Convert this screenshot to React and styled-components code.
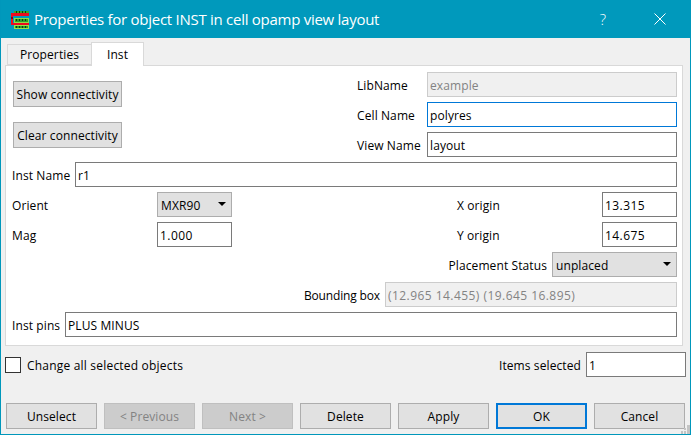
import React from "react";
import styled, { createGlobalStyle } from "styled-components";

const UI_FONT = `"Open Sans", "Noto Sans", "Liberation Sans", sans-serif`;

function AppIcon() {
  return (
    <svg width="20" height="20" viewBox="0 0 20 20">
      <rect x="3" y="2" width="15" height="3" fill="#37a52b" />
      <rect x="3" y="9" width="15" height="5" fill="#8fdc45" />
      <rect x="3" y="16" width="15" height="4" fill="#9ce04a" />
      <rect x="4" y="10" width="13" height="3" fill="#2f9e2a" />
      <rect x="4" y="17" width="13" height="2" fill="#2f9e2a" />
      <path d="M5 2h1v2H5zM8 2h1v2H8zM11 2h1v2h-1zM14 2h1v2h-1zM5 10h1v2H5zM8 10h1v2H8zM11 10h1v2h-1zM14 10h1v2h-1zM5 17h1v2H5zM8 17h1v2H8zM11 17h1v2h-1zM14 17h1v2h-1z" fill="#0b3d12" />
      <path d="M18 4H0v12h18v-2H2V7h16z" fill="#ee0a1e" />
      <rect x="0" y="8" width="2" height="2" fill="#8a0010" />
    </svg>
  );
}

function CloseIcon() {
  return (
    <svg width="12" height="12" viewBox="0 0 12 12">
      <path d="M.5.5l11 11M11.5.5l-11 11" stroke="#fff" strokeWidth="1" fill="none" />
    </svg>
  );
}

function SizeGrip() {
  return (
    <svg width="9" height="9" viewBox="0 0 9 9">
      <path d="M6 0h3v3H6zM3 3h2v2H3zM6 3h3v3H6zM0 6h2v3H0zM3 6h2v3H3zM6 6h3v3H6z" fill="#c4c4c4" />
    </svg>
  );
}

function Combo({ value, width }) {
  return (
    <ComboBox $width={width}>
      {value}
      <Arrow />
    </ComboBox>
  );
}

function App() {
  return (
    <Window>
      <GlobalStyle />
      <TitleBar>
        <AppIcon />
        <Title>Properties for object INST in cell opamp view layout</Title>
        <HelpMark>?</HelpMark>
        <CloseSlot>
          <CloseIcon />
        </CloseSlot>
      </TitleBar>
      <Body>
        <TabBar>
          <Tab>Properties</Tab>
          <Tab $active>Inst</Tab>
        </TabBar>
        <Pane>
          <TopSection>
            <ConnectivityColumn>
              <PaneButton>Show connectivity</PaneButton>
              <PaneButton>Clear connectivity</PaneButton>
            </ConnectivityColumn>
            <NameColumn>
              <Row>
                <Label $width={70}>LibName</Label>
                <Field $disabled $width={250} readOnly value="example" />
              </Row>
              <Row>
                <Label $width={70}>Cell Name</Label>
                <Field $focused $width={250} readOnly value="polyres" />
              </Row>
              <Row>
                <Label $width={70}>View Name</Label>
                <Field $width={250} readOnly value="layout" />
              </Row>
            </NameColumn>
          </TopSection>
          <Row>
            <Label $width={63}>Inst Name</Label>
            <Field readOnly value="r1" />
          </Row>
          <Row>
            <Label $width={145}>Orient</Label>
            <Combo value="MXR90" width={75} />
            <RightGroup>
              <Label $width={145}>X origin</Label>
              <Field $numeric $width={75} readOnly value="13.315" />
            </RightGroup>
          </Row>
          <Row>
            <Label $width={145}>Mag</Label>
            <Field $numeric $width={75} readOnly value="1.000" />
            <RightGroup>
              <Label $width={145}>Y origin</Label>
              <Field $numeric $width={75} readOnly value="14.675" />
            </RightGroup>
          </Row>
          <Row>
            <RightGroup>
              <Label>Placement Status</Label>
              <Combo value="unplaced" width={125} />
            </RightGroup>
          </Row>
          <Row>
            <RightGroup>
              <Label $tight>Bounding box</Label>
              <Field $numeric $disabled $width={292} readOnly value="(12.965 14.455) (19.645 16.895)" />
            </RightGroup>
          </Row>
          <Row>
            <Label $width={53}>Inst pins</Label>
            <Field readOnly value="PLUS MINUS" />
          </Row>
        </Pane>
        <SelectionRow>
          <CheckBox />
          <CheckLabel>Change all selected objects</CheckLabel>
          <RightGroup>
            <Label>Items selected</Label>
            <Field $width={100} readOnly value="1" />
          </RightGroup>
        </SelectionRow>
        <ButtonRow>
          <DialogButton>Unselect</DialogButton>
          <DialogButton disabled>&lt; Previous</DialogButton>
          <DialogButton disabled>Next &gt;</DialogButton>
          <DialogButton>Delete</DialogButton>
          <DialogButton>Apply</DialogButton>
          <DialogButton $default>OK</DialogButton>
          <DialogButton>Cancel</DialogButton>
        </ButtonRow>
        <GripCorner>
          <SizeGrip />
        </GripCorner>
      </Body>
    </Window>
  );
}

export default App;

const GlobalStyle = createGlobalStyle`
  html, body {
    margin: 0;
    padding: 0;
    overflow: hidden;
  }
  * {
    box-sizing: border-box;
  }
`;

const Window = styled.div`
  width: 691px;
  height: 435px;
  display: flex;
  flex-direction: column;
  border: 1px solid #0097bb;
  border-top: none;
  background: #f0f0f0;
  color: #000;
  font-family: ${UI_FONT};
  font-size: 12px;
  letter-spacing: 0.1px;
`;

const TitleBar = styled.div`
  height: 38px;
  flex: none;
  display: flex;
  align-items: center;
  padding: 0 24px 0 10px;
  background: #0099bc;
  color: #fff;
`;

const Title = styled.div`
  flex: 1;
  margin-left: 3px;
  font-size: 15px;
  letter-spacing: -0.27px;
  white-space: nowrap;
`;

const HelpMark = styled.span`
  margin-right: 48px;
  font-size: 15px;
  font-weight: 300;
  letter-spacing: 0;
`;

const CloseSlot = styled.span`
  display: flex;
  width: 12px;
  height: 12px;
`;

const Body = styled.div`
  position: relative;
  flex: 1;
  display: flex;
  flex-direction: column;
  padding: 4px 4px 5px 4px;
`;

const TabBar = styled.div`
  height: 23px;
  flex: none;
  display: flex;
  align-items: flex-end;
  padding-left: 2px;
`;

const Tab = styled.div`
  position: relative;
  z-index: ${(p) => (p.$active ? 1 : 0)};
  height: ${(p) => (p.$active ? "24px" : "21px")};
  width: ${(p) => (p.$active ? "53px" : "84px")};
  margin-bottom: ${(p) => (p.$active ? "-1px" : "0")};
  padding-bottom: ${(p) => (p.$active ? "1px" : "0")};
  display: flex;
  align-items: center;
  justify-content: center;
  border: 1px solid #d9d9d9;
  border-bottom: ${(p) => (p.$active ? "none" : "1px solid #d9d9d9")};
  border-right: ${(p) => (p.$active ? "1px solid #d9d9d9" : "none")};
  background: ${(p) => (p.$active ? "#fff" : "#f0f0f0")};
`;

const Pane = styled.div`
  height: 281px;
  flex: none;
  margin-right: 3px;
  display: flex;
  flex-direction: column;
  gap: 5px;
  padding: 6px 5px 0 6px;
  border: 1px solid #d9d9d9;
  background: #fff;
`;

const TopSection = styled.div`
  display: flex;
  justify-content: space-between;
`;

const ConnectivityColumn = styled.div`
  display: flex;
  flex-direction: column;
  gap: 15px;
  padding: 9px 0 0 1px;
`;

const NameColumn = styled.div`
  display: flex;
  flex-direction: column;
  gap: 5px;
`;

const Row = styled.div`
  height: 25px;
  display: flex;
  align-items: center;
`;

const RightGroup = styled.div`
  margin-left: auto;
  display: flex;
  align-items: center;
`;

const Label = styled.span`
  flex: none;
  width: ${(p) => (p.$width ? `${p.$width}px` : "auto")};
  margin-right: ${(p) => (p.$width ? "0" : "5px")};
  padding-top: 1px;
  letter-spacing: ${(p) => (p.$tight ? "-0.15px" : "inherit")};
  white-space: nowrap;
`;

const Field = styled.input`
  flex: ${(p) => (p.$width ? "none" : "1")};
  width: ${(p) => (p.$width ? `${p.$width}px` : "auto")};
  min-width: 0;
  height: 25px;
  padding: 1px 2px 0;
  outline: none;
  border: 1px solid
    ${(p) => (p.$focused ? "#0078d7" : p.$disabled ? "#cccccc" : "#7a7a7a")};
  border-radius: 0;
  background: ${(p) => (p.$disabled ? "#f0f0f0" : "#fff")};
  color: ${(p) => (p.$disabled ? "#838383" : "#000")};
  font: inherit;
  letter-spacing: ${(p) => (p.$numeric ? "0.45px" : "inherit")};
`;

const ComboBox = styled.div`
  flex: none;
  width: ${(p) => p.$width}px;
  height: 25px;
  display: flex;
  align-items: center;
  justify-content: space-between;
  padding: 1px 5px 0 3px;
  border: 1px solid #adadad;
  background: #e1e1e1;
`;

const Arrow = styled.span`
  width: 0;
  height: 0;
  margin-top: -3px;
  border-left: 4px solid transparent;
  border-right: 4px solid transparent;
  border-top: 4px solid #000;
`;

const PaneButton = styled.button`
  width: 109px;
  height: 26px;
  padding: 0;
  border: 1px solid #adadad;
  border-radius: 0;
  background: #e1e1e1;
  color: #000;
  font: inherit;
  letter-spacing: inherit;
`;

const SelectionRow = styled.div`
  height: 25px;
  flex: none;
  margin-top: 6px;
  display: flex;
  align-items: center;
`;

const CheckBox = styled.span`
  width: 16px;
  height: 16px;
  flex: none;
  border: 1px solid #333;
  background: #fff;
`;

const CheckLabel = styled.span`
  margin-left: 6px;
  padding-top: 1px;
  letter-spacing: 0.2px;
`;

const ButtonRow = styled.div`
  margin-top: 26px;
  display: flex;
  gap: 7px;
  padding-left: 1px;
`;

const DialogButton = styled.button`
  width: 91px;
  height: 26px;
  padding: 0;
  border: ${(p) => (p.$default ? "2px solid #0078d7" : "1px solid #adadad")};
  border-color: ${(p) => (p.disabled ? "#bfbfbf" : "")};
  border-radius: 0;
  background: ${(p) => (p.disabled ? "#cccccc" : "#e1e1e1")};
  color: ${(p) => (p.disabled ? "#838383" : "#000")};
  font: inherit;
  letter-spacing: inherit;
`;

const GripCorner = styled.div`
  position: absolute;
  right: 0;
  bottom: 0;
  display: flex;
`;
